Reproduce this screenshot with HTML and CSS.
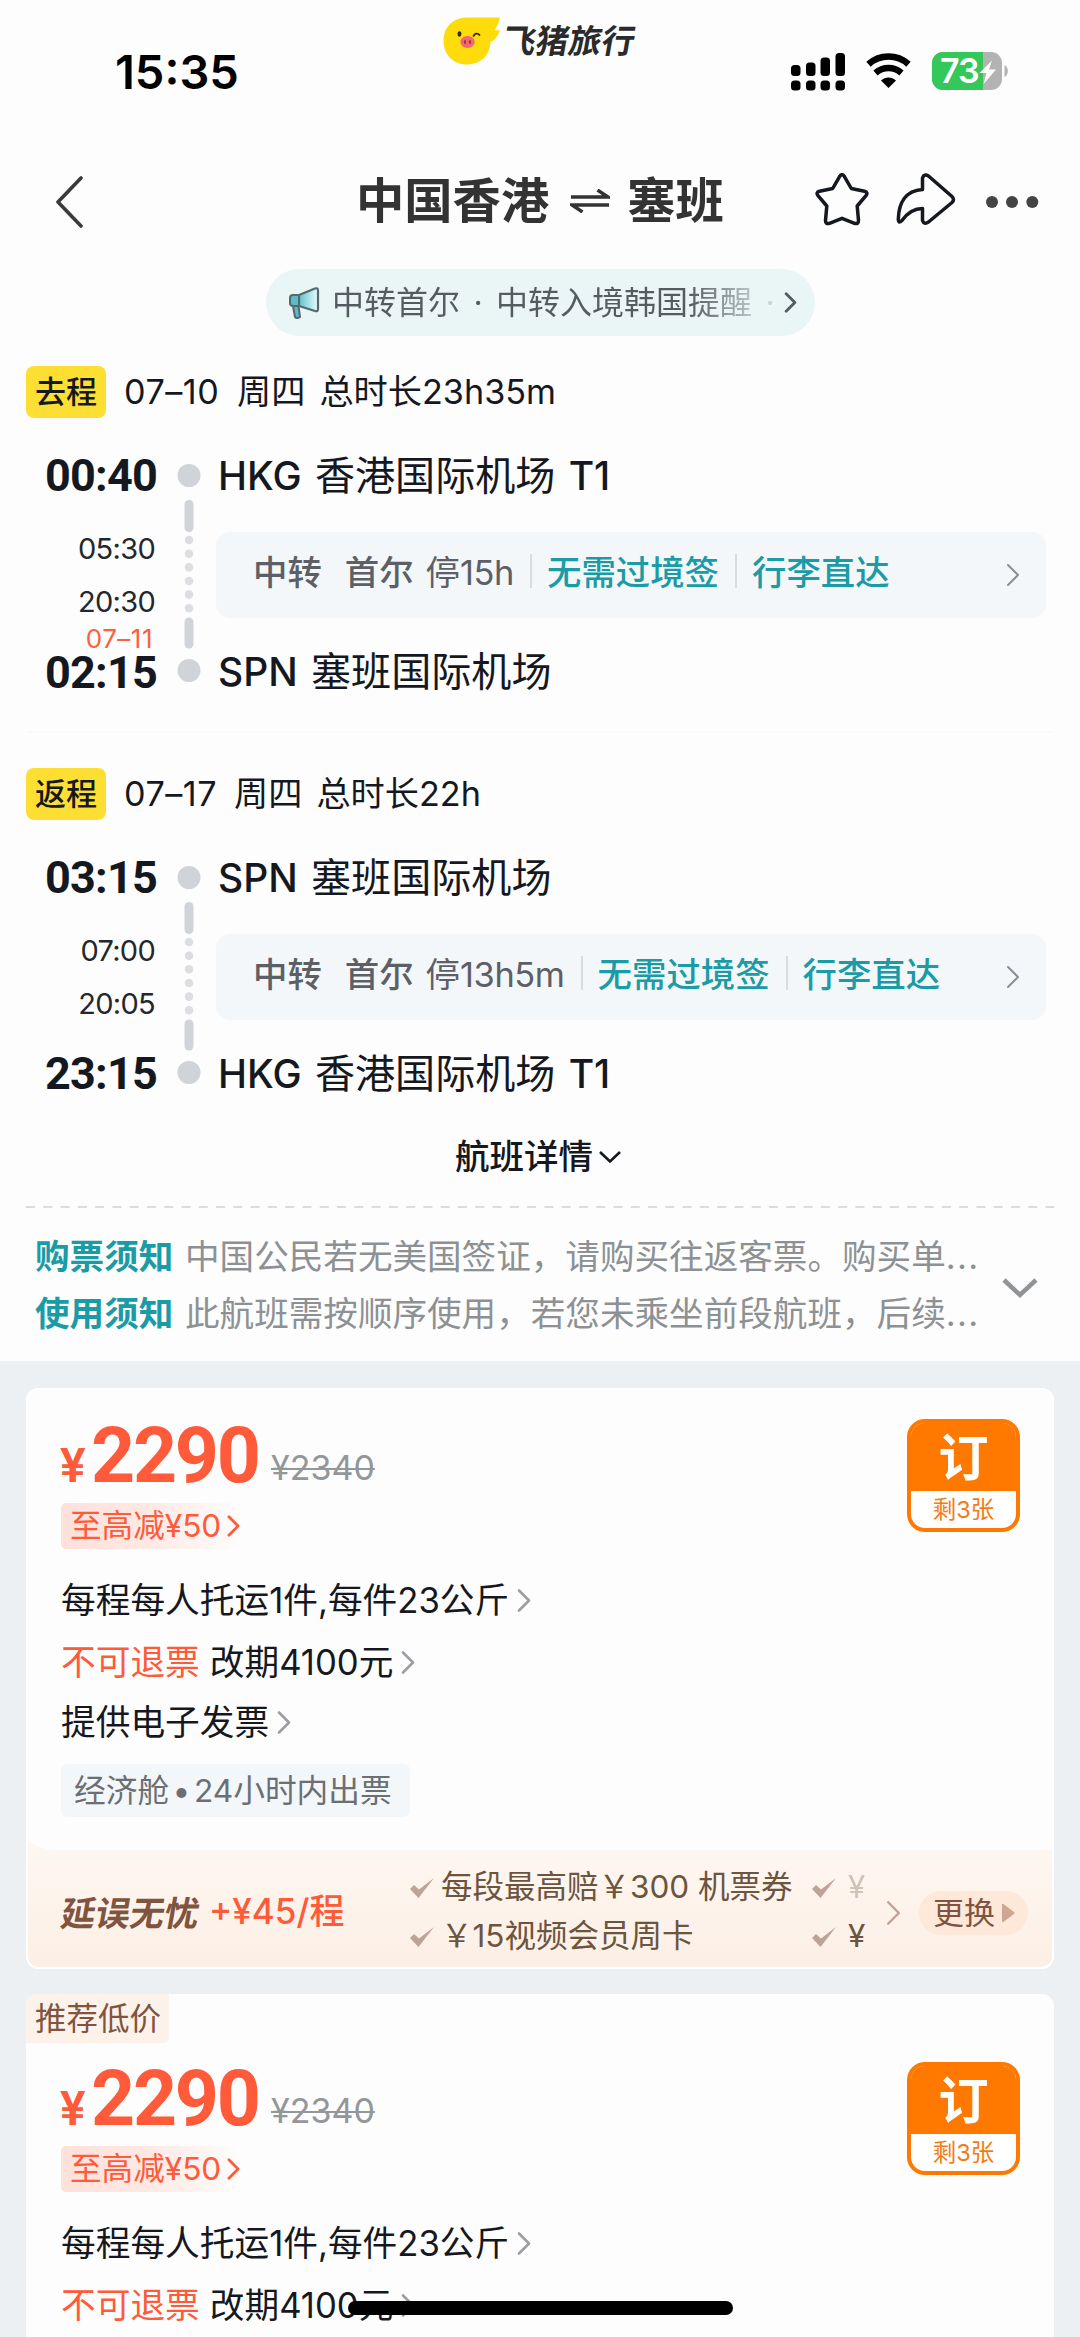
FILE: index.html
```html
<!DOCTYPE html>
<html lang="zh-CN">
<head>
<meta charset="utf-8">
<title>中国香港 ⇌ 塞班</title>
<link rel="stylesheet" href="styles.css">
</head>
<body>
<svg class="defs" width="0" height="0">
  <symbol id="chev" viewBox="0 0 14 24"><path d="M2 2 L12 12 L2 22" fill="none" stroke="currentColor" stroke-linecap="round" stroke-linejoin="round"/></symbol>
  <symbol id="tick" viewBox="0 0 26 22"><path d="M1 12 L5 8 L10 12.500 L25 1 L9.500 21 Z" fill="currentColor"/></symbol>
  <symbol id="rail" viewBox="0 0 24 236">
    <g fill="#d0d3d8">
      <circle cx="12" cy="20.500" r="11.500"/><circle cx="12" cy="215.500" r="11.500"/>
      <rect x="7.500" y="45" width="9" height="32" rx="4.500"/><rect x="7.500" y="162.500" width="9" height="31" rx="4.500"/>
    </g>
    <g fill="#dcdee2">
      <circle cx="12" cy="85" r="4.300"/><circle cx="12" cy="98.700" r="4.300"/><circle cx="12" cy="112.300" r="4.300"/>
      <circle cx="12" cy="126" r="4.300"/><circle cx="12" cy="139.600" r="4.300"/><circle cx="12" cy="153.300" r="4.300"/>
    </g>
  </symbol>
</svg>

<div class="screen">
  <header class="top">
    <div class="status">
      <div class="clock">15:35</div>
      <div class="brand">
        <svg width="58" height="50" viewBox="0 0 58 50">
          <path d="M25 1.500 H58 C57 7 55 11 52.500 14 L58 14.500 C56 20 53 24 48.500 26 C48 40 38 48.500 25 48.500 C11 48.500 1.500 38 1.500 25 C1.500 11 11 1.500 25 1.500 Z" fill="#fedc0c"/>
          <ellipse cx="17.500" cy="18" rx="1.900" ry="2.800" fill="#332a20"/>
          <path d="M31.500 20 C33 17 36 17 37.500 19" fill="none" stroke="#332a20" stroke-width="1.800" stroke-linecap="round"/>
          <ellipse cx="25.500" cy="26" rx="7.200" ry="6" fill="#f0696f"/>
          <ellipse cx="23" cy="26" rx="1.100" ry="2" fill="#a83040"/><ellipse cx="28" cy="26" rx="1.100" ry="2" fill="#a83040"/>
        </svg>
        <span class="brand-name">飞猪旅行</span>
      </div>
      <svg class="signal" width="55" height="38" viewBox="0 0 55 38">
        <rect x="0" y="12" width="9.500" height="11" rx="3.500"/><rect x="15" y="9.500" width="9.500" height="13.500" rx="3.500"/><rect x="29.500" y="4.500" width="9.500" height="18.500" rx="3.500"/><rect x="44.500" y="0" width="9.500" height="23" rx="3.500"/>
        <rect x="0" y="27.500" width="9.500" height="10" rx="3.500"/><rect x="15" y="27.500" width="9.500" height="10" rx="3.500"/><rect x="29.500" y="27.500" width="9.500" height="10" rx="3.500"/><rect x="44.500" y="27.500" width="9.500" height="10" rx="3.500"/>
      </svg>
      <svg class="wifi" width="47" height="36" viewBox="0 0 47 36">
        <path d="M3.500 11.200 C15 1 32 1 43.500 11.200" fill="none" stroke="#000" stroke-width="6.600"/>
        <path d="M10.500 20 C18 13.300 29 13.300 36.500 20" fill="none" stroke="#000" stroke-width="6.400"/>
        <path d="M16 27.500 C20.500 23.500 26.500 23.500 31 27.500 L23.500 35 Z"/>
      </svg>
      <svg class="battery" width="78" height="38" viewBox="0 0 78 38">
        <rect width="70" height="38" rx="11" fill="#b3b3b3"/>
        <path d="M11 0 H51 V38 H11 A11 11 0 0 1 0 27 V11 A11 11 0 0 1 11 0 Z" fill="#34c759"/>
        <path d="M72.500 13 C77 15 77 23 72.500 25 Z" fill="#b3b3b3"/>
        <text x="8" y="31" class="battery-text">73</text>
        <path d="M60 8.500 L47.500 21 H54.500 L51.500 32 L64 17.500 H57 Z" fill="#fff"/>
      </svg>
    </div>
    <div class="nav">
      <svg class="back" width="30" height="52" viewBox="0 0 30 52"><path d="M27 2 L4 26 L27 50" fill="none" stroke="#3a3a3c" stroke-width="3.600" stroke-linecap="round" stroke-linejoin="round"/></svg>
      <h1 class="title"><span>中国香港</span>
        <svg width="40" height="24" viewBox="0 0 40 24"><path d="M1 8 H38 L27.500 1 M39 16 H2 L12.500 23" fill="none" stroke="#333" stroke-width="3.400"/></svg>
        <span class="to">塞班</span></h1>
      <div class="actions">
        <svg width="54" height="54" viewBox="0 0 54 54"><path d="M24.700 3.300 Q27 0 29.300 3.300 L36.300 15.500 L49.500 18.300 Q53.500 19.500 51 22.600 L42.200 33 L43.500 47.500 Q43.500 51.500 39.500 50.300 L27 45.300 L14.500 50.300 Q10.500 51.500 10.500 47.500 L11.800 33 L3 22.600 Q0.500 19.500 4.500 18.300 L17.700 15.500 Z" fill="none" stroke="#15181e" stroke-width="3.500" stroke-linejoin="round"/></svg>
        <svg width="60" height="54" viewBox="0 0 60 54"><path d="M26.500 16.500 V5 Q28 .5 32.500 3 L56 23.500 Q59 26.500 56 29.500 L32.500 49 Q28 52 26.500 47.500 V35.500 C17 35.500 11 40.500 6 47.500 Q2 51 2.300 46 C2.800 30 9.500 17.500 26.500 16.500 Z" fill="none" stroke="#15181e" stroke-width="3.500" stroke-linejoin="round"/></svg>
        <svg width="54" height="54" viewBox="0 0 54 54" fill="#444"><circle cx="7" cy="29" r="6"/><circle cx="27" cy="29" r="6"/><circle cx="47.300" cy="29" r="6"/></svg>
      </div>
    </div>
  </header>

  <div class="notice-pill">
    <svg width="34" height="36" viewBox="0 0 34 36">
      <defs><linearGradient id="horn" x1="0" x2="1"><stop offset="0" stop-color="#5fc3cd"/><stop offset="1" stop-color="#e8fdfd"/></linearGradient></defs>
      <path d="M12 10 L28 3.500 Q31 2.500 31 5.500 V24 Q31 27 28 26 L12 21 Z" fill="url(#horn)" stroke="#56686f" stroke-width="2.200"/>
      <path d="M12 10 H6 Q3 10 3 13 V18 Q3 21 6 21 H12 Z M6 21 L8 32 Q10 34 13 32 L11.500 21" fill="#5bbcc8" stroke="#56686f" stroke-width="2"/>
    </svg>
    <span class="notice-text">中转首尔<i>·</i>中转入境韩国提醒<i class="tail">·</i></span>
    <svg class="notice-arrow" width="13" height="21"><use href="#chev"/></svg>
  </div>

  <section class="leg">
    <div class="leg-head"><b class="badge">去程</b><span class="date">07–10</span><span>周四</span><span class="total">总时长23h35m</span></div>
    <div class="route">
      <div class="times"><b>00:40</b><span class="t1">05:30</span><span class="t2">20:30</span><em>07–11</em><b class="last">02:15</b></div>
      <svg class="rail" width="24" height="236"><use href="#rail"/></svg>
      <div class="places">
        <div class="place"><i>HKG</i> 香港国际机场 <i>T1</i></div>
        <div class="transfer"><b>中转</b><b class="city">首尔</b><span>停<i>15h</i></span><strong>无需过境签</strong><strong>行李直达</strong><svg width="14" height="26"><use href="#chev"/></svg></div>
        <div class="place"><i>SPN</i> 塞班国际机场</div>
      </div>
    </div>
  </section>

  <hr class="leg-divider">

  <section class="leg">
    <div class="leg-head"><b class="badge">返程</b><span class="date d17">07–17</span><span>周四</span><span class="total">总时长22h</span></div>
    <div class="route">
      <div class="times"><b>03:15</b><span class="t1">07:00</span><span class="t2">20:05</span><b class="last">23:15</b></div>
      <svg class="rail" width="24" height="236"><use href="#rail"/></svg>
      <div class="places">
        <div class="place"><i>SPN</i> 塞班国际机场</div>
        <div class="transfer"><b>中转</b><b class="city">首尔</b><span>停<i>13h5m</i></span><strong>无需过境签</strong><strong>行李直达</strong><svg width="14" height="26"><use href="#chev"/></svg></div>
        <div class="place"><i>HKG</i> 香港国际机场 <i>T1</i></div>
      </div>
    </div>
  </section>

  <div class="detail-toggle">航班详情<svg width="24" height="14" viewBox="0 0 24 14"><path d="M2 2 L12 11.500 L22 2" fill="none" stroke="#15181e" stroke-width="2.600"/></svg></div>
  <svg class="dashes" width="1028" height="2"><path d="M0 1 H1028" stroke="#dadcde" stroke-width="2" stroke-dasharray="9 8.280"/></svg>

  <div class="rules">
    <div class="rules-list">
      <p><b>购票须知</b><span>中国公民若无美国签证，请购买往返客票。购买单<i>...</i></span></p>
      <p><b>使用须知</b><span>此航班需按顺序使用，若您未乘坐前段航班，后续<i>...</i></span></p>
    </div>
    <svg width="38" height="22" viewBox="0 0 38 22"><path d="M3 3 L19 18 L35 3" fill="none" stroke="#919497" stroke-width="4.500"/></svg>
  </div>

  <main class="fares">
    <article class="fare">
      <div class="fare-body">
        <div class="price"><small>¥</small><b>2290</b><s>¥2340</s></div>
        <div class="coupon">至高减<i>¥50</i><svg width="13" height="22"><use href="#chev"/></svg></div>
        <div class="terms">
          <p>每程每人托运1件,每件23公斤<svg width="14" height="25"><use href="#chev"/></svg></p>
          <p><em>不可退票</em>改期4100元<svg width="14" height="25"><use href="#chev"/></svg></p>
          <p>提供电子发票<svg width="14" height="25"><use href="#chev"/></svg></p>
        </div>
        <div class="cabin">经济舱<i>•</i>24小时内出票</div>
        <div class="book"><b>订</b><span>剩3张</span></div>
      </div>
      <div class="insurance">
        <b class="ins-name">延误无忧</b><span class="ins-price">+¥45/程</span>
        <div class="perks">
          <p><svg width="26" height="22"><use href="#tick"/></svg><span>每段最高赔￥300 机票券</span></p>
          <p><svg width="26" height="22"><use href="#tick"/></svg><span>￥15视频会员周卡</span></p>
        </div>
        <div class="perks more">
          <p class="faded"><svg width="26" height="22"><use href="#tick"/></svg><span>¥</span></p>
          <p><svg width="26" height="22"><use href="#tick"/></svg><span>¥</span></p>
        </div>
        <svg class="ins-arrow" width="15" height="26"><use href="#chev"/></svg>
        <div class="swap">更换<svg width="14" height="20" viewBox="0 0 14 20"><path d="M1 2 Q1 0 3 1.500 L13 9 Q14 10 13 11 L3 18.500 Q1 20 1 18 Z" fill="#cda792"/></svg></div>
      </div>
    </article>

    <article class="fare second">
      <div class="ribbon">推荐低价</div>
      <div class="fare-body">
        <div class="price"><small>¥</small><b>2290</b><s>¥2340</s></div>
        <div class="coupon">至高减<i>¥50</i><svg width="13" height="22"><use href="#chev"/></svg></div>
        <div class="terms">
          <p>每程每人托运1件,每件23公斤<svg width="14" height="25"><use href="#chev"/></svg></p>
          <p><em>不可退票</em>改期4100元<svg width="14" height="25"><use href="#chev"/></svg></p>
        </div>
        <div class="book"><b>订</b><span>剩3张</span></div>
      </div>
    </article>
  </main>
  <div class="home-bar"></div>
</div>
</body>
</html>
```

FILE: styles.css
```css
* { box-sizing: border-box; margin: 0; padding: 0; }
i, em { font-style: normal; }
svg { display: block; flex: none; }
.defs { position: absolute; }

body {
  width: 1080px;
  background: #fdfdfd;
  color: #15181e;
  font-family: Inter, "Noto Sans CJK SC", sans-serif;
  white-space: nowrap;
}
.screen {
  position: relative;
  width: 1080px;
  height: 2337px;
  overflow: hidden;
  display: flex;
  flex-direction: column;
}
.screen > * { flex: none; }

/* status bar */
.status { display: flex; height: 108px; align-items: flex-start; }
.clock { width: 327px; margin-left: 115px; padding-top: 48px; font-size: 47px; line-height: 48px; font-weight: 600; color: #000; }
.brand { display: flex; width: 349px; padding-top: 16px; }
.brand-name { margin-left: 3px; font-size: 33px; line-height: 50px; font-weight: 700; color: #2b2b2b; transform: skewX(-10deg); }
.signal { margin-top: 53px; }
.wifi { margin: 53px 0 0 19px; }
.battery { margin: 52px 0 0 20px; }
.battery-text { font-size: 34px; font-weight: 600; fill: #fff; letter-spacing: -1px; }

/* title bar */
.nav { display: flex; height: 161px; align-items: flex-start; padding-top: 65px; }
.back { margin: 3px 0 0 54px; }
.title { display: flex; align-items: center; width: 459px; margin-left: 272px; height: 56px; gap: 21px; font-size: 48.300px; line-height: 56px; font-weight: 600; color: #333; }
.title .to { margin-left: -4px; }
.actions { display: flex; gap: 27px; }
.actions svg:last-child { margin-left: 2px; }

/* notice pill */
.notice-pill { display: flex; align-items: center; width: 549px; height: 67px; margin-left: 266px; padding-left: 21px; border-radius: 34px; background: #eaf6f6; color: #5c6368; }
.notice-text { width: 447px; margin-left: 11px; font-size: 32px; line-height: 40px; background: linear-gradient(90deg, #555c61 80%, #c9d6d8 96%); -webkit-background-clip: text; background-clip: text; color: transparent; }
.notice-text i { display: inline-block; width: 36px; text-align: center; }
.notice-arrow { margin-left: 5px; stroke-width: 3.200; color: #555c61; }

/* legs */
.leg { margin-top: 30px; height: 326px; }
.leg-divider { height: 2px; margin: 39px 26px 5px; border: 0; background: #f9fafa; }
.leg-head { display: flex; align-items: center; height: 52px; padding-left: 26px; font-size: 34.200px; line-height: 52px; }
.badge { width: 80px; height: 52px; margin-right: 18px; border-radius: 8px; background: #fddf33; font-size: 31px; font-weight: 500; text-align: center; }
.date { width: 113px; letter-spacing: .5px; }
.total { margin-left: 14px; }
.date.d17 { width: 110px; }
.route { display: flex; height: 236px; margin-top: 37px; }
.times { display: flex; flex-direction: column; width: 157px; text-align: right; }
.times b { font: 700 45px/40px Roboto, sans-serif; letter-spacing: -.8px; height: 40px; padding-top: 1px; }
.times span { font-size: 29px; line-height: 34px; letter-spacing: -.7px; padding-right: 2px; color: #24272c; }
.times .t1 { margin-top: 37px; }
.times .t2 { margin-top: 19px; }
.times em { margin-top: 6px; height: 27px; padding-right: 4px; font-size: 26px; line-height: 27px; letter-spacing: .5px; color: #ff5e43; }
.times .last { margin-top: auto; }
.rail { margin-left: 20px; }
.places { margin-left: 15px; width: 830px; }
.place { height: 40px; padding-left: 2px; font-size: 40.100px; line-height: 42px; word-spacing: 2px; }
.place i { font-weight: 500; font-size: 39px; }
.transfer { display: flex; align-items: center; height: 86px; margin: 37px 0 33px; padding: 0 26px 4px 37px; border-radius: 14px; background: #f3f7f9; font-size: 34.400px; line-height: 40px; color: #5c6066; }
.transfer b { font-weight: 500; }
.transfer .city { margin: 0 12px 0 23px; }
.transfer span { padding-right: 16px; }
.transfer i { letter-spacing: -.4px; }
.transfer strong { position: relative; font-weight: 500; color: #1a9ba5; padding: 0 16px 0 17px; }
.transfer strong::before { content: ""; position: absolute; left: 0; top: 1px; width: 2px; height: 34px; background: #d8dcdf; }
.transfer svg { margin-left: auto; margin-top: 4px; stroke-width: 2; color: #8b8f94; }

.detail-toggle { display: flex; justify-content: center; align-items: center; gap: 5px; height: 42px; margin-top: 42px; font-size: 34.500px; line-height: 42px; font-weight: 500; padding-right: 3px; }
.dashes { margin: 28px 0 0 26px; }

.rules { display: flex; align-items: center; height: 153px; padding-left: 35px; font-size: 34.600px; }
.rules-list { width: 966px; }
.rules p { display: flex; height: 57px; line-height: 57px; }
.rules b { width: 150px; font-weight: 600; color: #1a9ba5; }
.rules span { color: #8d9194; }
.rules i { letter-spacing: 1.300px; }
.rules svg { margin-top: 6px; }

/* fares */
.fares { height: 977px; padding: 27px 26px 0; background: #ecf0f2; }
.fare { display: flex; flex-direction: column; border-radius: 12px; overflow: hidden; height: 581px; border: 2px solid #fff; background: linear-gradient(#fef8f2 440px, #fcefe5) padding-box, #fff border-box; }
.fare.second { margin-top: 25px; height: 400px; background: #fdfdfd; border: 0; }
.fare-body { position: relative; flex: none; height: 460px; padding: 37px 33px 0; background: #fdfdfd; border-bottom-left-radius: 30px 14px; }
.price { display: flex; align-items: baseline; height: 76px; color: #ff5a39; font-family: Roboto, sans-serif; line-height: 58px; }
.price small { font-size: 48px; font-weight: 600; width: 31px; margin-left: -1px; }
.price b { font-size: 77px; letter-spacing: -2.300px; width: 180px; }
.price s { position: relative; top: -2px; font: 400 34px Inter, sans-serif; letter-spacing: 0; color: #94979a; text-decoration-thickness: 2px; }
.coupon { display: flex; align-items: center; width: 180px; height: 46px; padding-left: 9px; border-radius: 5px 0 0 5px; background: linear-gradient(90deg, #ffe0da, #ffe9e4 50%, #fdfdfd); color: #ff5a39; font-size: 31.600px; line-height: 46px; }
.coupon i { letter-spacing: 0; }
.coupon svg { margin-left: 6px; stroke-width: 3; }
.terms { padding-top: 21px; }
.terms p { display: flex; align-items: center; height: 61px; font-size: 34.700px; line-height: 61px; }
.terms p + p { height: 62px; }
.terms p:nth-child(3) { height: 58px; }
.terms em { margin-right: 10px; color: #ff5a39; }
.terms svg { margin-left: 8px; stroke-width: 2.600; color: #9b9ea2; }
.cabin { display: inline-block; width: 349px; height: 53px; margin-top: 13px; padding-left: 13px; border-radius: 6px; background: #f3f7f9; color: #6b6f74; font-size: 31.700px; line-height: 53px; }
.cabin i { margin: 0 3.500px; }
.book { position: absolute; right: 32px; top: 29px; width: 113px; height: 113px; border: 4px solid #ff7800; border-radius: 18px; overflow: hidden; background: #fff; text-align: center; color: #f47b14; }
.book b { display: block; height: 68px; background: #ff7800; color: #fff; font-size: 50px; line-height: 71px; font-weight: 600; }
.book span { display: block; font-size: 23.500px; line-height: 37px; }

.insurance { display: flex; align-items: center; height: 117px; padding-left: 34px; color: #6d543f; }
.ins-name { width: 147px; margin-top: 5px; font-size: 34.500px; font-weight: 700; color: #80543f; transform: skewX(-10deg); }
.ins-price { width: 200px; font-size: 35px; font-weight: 500; color: #ff5a39; }
.perks { width: 402px; margin-top: 5px; font-size: 31.500px; }
.perks p { display: flex; align-items: center; height: 49px; line-height: 49px; }
.perks svg { margin-right: 6px; margin-top: 3px; color: #bfa397; }
.perks.more { width: 75px; }
.perks.more svg { margin-right: 11px; }
.perks .faded span { opacity: .3; }
.ins-arrow { stroke-width: 2.200; color: #c0a193; margin-top: 9px; }
.swap { display: flex; align-items: center; gap: 6px; width: 109px; height: 44px; margin: 8px 0 0 18px; padding-left: 14px; border-radius: 22px; background: #fde8d9; color: #80543f; font-size: 31px; line-height: 44px; }

.ribbon { flex: none; width: 143px; height: 49px; margin-bottom: -10px; padding-left: 9px; background: #fcf2ea; color: #80543f; font-size: 31.500px; line-height: 49px; border-bottom-right-radius: 6px; position: relative; z-index: 1; }
.second .fare-body { padding: 37px 35px 0; background: none; }
.second .book { right: 34px; }

.home-bar { position: absolute; left: 348px; top: 2301px; width: 385px; height: 14px; border-radius: 7px; background: #000; }
```
